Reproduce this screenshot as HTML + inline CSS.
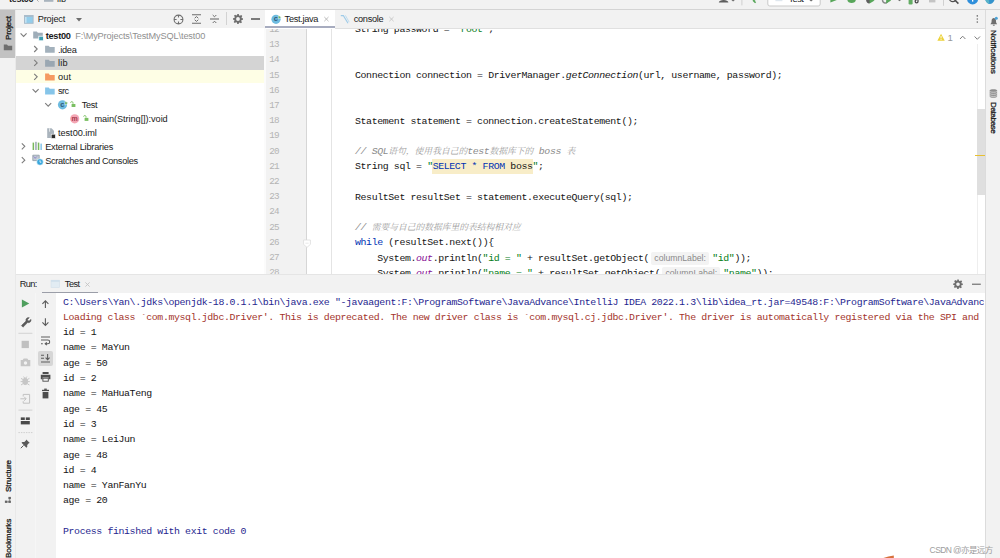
<!DOCTYPE html>
<html><head><meta charset="utf-8"><title>IDE</title>
<style>
*{box-sizing:border-box;margin:0;padding:0}
html,body{width:1000px;height:558px;overflow:hidden;background:#fff}
body{position:relative;font-family:"Liberation Sans","Noto Sans CJK SC",sans-serif;font-size:9.6px;color:#1a1a1a}
.a{position:absolute}
.t{position:absolute;white-space:pre;line-height:14px;height:14px;font-size:9.2px}
.m{position:absolute;white-space:pre;font-family:"Liberation Mono","Noto Sans CJK SC",monospace;font-size:9.90px;letter-spacing:-0.376px;line-height:15px;height:15px;color:#141414}
.ln{position:absolute;left:264px;width:15px;text-align:right;font-family:"Liberation Mono",monospace;font-size:9.3px;letter-spacing:-0.7px;line-height:15px;height:15px;color:#b4b4b4;margin-top:-0.4px}
.hint{position:absolute;height:13px;width:58.1px;line-height:13.4px;padding:0 0 0 3.1px;border-radius:2px;background:#f3f3f3;color:#8a8a8a;font-size:8.7px;white-space:pre}
.v{position:absolute;white-space:pre;-webkit-text-stroke:0.3px #1a1a1a;font-size:8.1px;line-height:12px;height:12px;transform-origin:0 0}
  .cj{color:#9c9c9c;font-family:"Liberation Serif","Noto Serif CJK SC",serif;font-size:8.78px;letter-spacing:0}
.g{background:#f2f2f2}
svg{position:absolute;overflow:visible}
</style></head><body>
<!-- top bar -->
<div class="a g" style="left:0;top:0;width:1000px;height:9px"></div>
<div class="a" style="left:0;top:9px;width:1000px;height:1px;background:#d4d4d4"></div>
<!-- left strip -->
<div class="a g" style="left:0;top:10px;width:15px;height:548px"></div>
<div class="a" style="left:15px;top:10px;width:1px;height:548px;background:#e9e9e9"></div>
<div class="a" style="left:0;top:10px;width:15px;height:48px;background:#c2c2c2"></div>
<!-- project header -->
<div class="a g" style="left:16px;top:10px;width:248px;height:18px"></div>
<!-- tree row highlights -->
<div class="a" style="left:16px;top:56.2px;width:248px;height:13.4px;background:#d4d4d4"></div>
<div class="a" style="left:16px;top:69.6px;width:248px;height:13.7px;background:#fefee5"></div>
<!-- editor tabs -->
<div class="a g" style="left:264px;top:10px;width:721px;height:18px"></div>
<div class="a" style="left:264px;top:28px;width:721px;height:1px;background:#e0e0e0"></div>
<div class="a" style="left:265px;top:10px;width:70px;height:19px;background:#fff"></div>
<div class="a" style="left:265px;top:25.9px;width:70px;height:2.2px;background:#a7acbf"></div>
<!-- gutter -->
<div class="a g" style="left:264px;top:29px;width:42px;height:245px"></div>
<div class="a" style="left:264px;top:28px;width:1.5px;height:246px;background:#fbfbfb"></div>
<div class="a" style="left:306px;top:29px;width:1px;height:245px;background:#d6d6d6"></div>
<div class="a" style="left:331px;top:29px;width:1px;height:245px;background:#e4e4e4"></div>
<!-- editor code -->
<div class="a" style="left:264px;top:29px;width:721px;height:245px;overflow:hidden"><div class="a" style="left:-264px;top:-29px;width:1000px;height:558px">
<div class="a" style="left:432px;top:158.6px;width:100.6px;height:15.5px;background:#f8edc8"></div>
<div class="ln" style="top:22.29px">12</div>
<div class="m" style="left:354.99px;top:22.29px;">String password = </div>
<div class="m" style="left:454.87px;top:22.29px;color:#067d17">"root"</div>
<div class="m" style="left:488.17px;top:22.29px;">;</div>
<div class="ln" style="top:37.50px">13</div>
<div class="ln" style="top:52.71px">14</div>
<div class="ln" style="top:67.93px">15</div>
<div class="m" style="left:354.99px;top:67.93px;">Connection connection = DriverManager.</div>
<div class="m" style="left:565.85px;top:67.93px;font-style:italic">getConnection</div>
<div class="m" style="left:637.99px;top:67.93px;">(url, username, password);</div>
<div class="ln" style="top:83.14px">16</div>
<div class="ln" style="top:98.36px">17</div>
<div class="ln" style="top:113.57px">18</div>
<div class="m" style="left:354.99px;top:113.57px;">Statement statement = connection.createStatement();</div>
<div class="ln" style="top:128.78px">19</div>
<div class="ln" style="top:144.00px">20</div>
<div class="m" style="left:354.99px;top:144.00px;color:#8c8c8c;font-style:italic">// SQL<span class="cj">语句，使用我自己的</span>test<span class="cj">数据库下的</span> boss <span class="cj">表</span></div>
<div class="ln" style="top:159.21px">21</div>
<div class="m" style="left:354.99px;top:159.21px;">String sql = </div>
<div class="m" style="left:427.13px;top:159.21px;color:#067d17">"</div>
<div class="m" style="left:432.68px;top:159.21px;color:#0033b3">SELECT * FROM </div>
<div class="m" style="left:510.36px;top:159.21px;">boss</div>
<div class="m" style="left:532.56px;top:159.21px;color:#067d17">"</div>
<div class="m" style="left:538.11px;top:159.21px;">;</div>
<div class="ln" style="top:174.43px">22</div>
<div class="ln" style="top:189.64px">23</div>
<div class="m" style="left:354.99px;top:189.64px;">ResultSet resultSet = statement.executeQuery(sql);</div>
<div class="ln" style="top:204.85px">24</div>
<div class="ln" style="top:220.07px">25</div>
<div class="m" style="left:354.99px;top:220.07px;color:#8c8c8c;font-style:italic">// <span class="cj">需要与自己的数据库里的表结构相对应</span></div>
<div class="ln" style="top:235.28px">26</div>
<div class="m" style="left:354.99px;top:235.28px;color:#0033b3">while</div>
<div class="m" style="left:382.74px;top:235.28px;"> (resultSet.next()){</div>
<div class="ln" style="top:250.50px">27</div>
<div class="ln" style="top:265.71px">28</div>
<div class="m" style="left:377.19px;top:250.50px;">System.</div>
<div class="m" style="left:416.03px;top:250.50px;color:#871094;font-style:italic">out</div>
<div class="m" style="left:432.68px;top:250.50px;">.println(</div>
<div class="m" style="left:482.62px;top:250.50px;color:#067d17">"id = "</div>
<div class="m" style="left:521.46px;top:250.50px;"> + resultSet.getObject(</div>
<div class="hint" style="left:651.19px;top:251.70px">columnLabel:</div>
<div class="m" style="left:712.19px;top:250.50px;color:#067d17">"id"</div>
<div class="m" style="left:734.39px;top:250.50px">));</div>
<div class="m" style="left:377.19px;top:265.71px;">System.</div>
<div class="m" style="left:416.03px;top:265.71px;color:#871094;font-style:italic">out</div>
<div class="m" style="left:432.68px;top:265.71px;">.println(</div>
<div class="m" style="left:482.62px;top:265.71px;color:#067d17">"name = "</div>
<div class="m" style="left:532.56px;top:265.71px;"> + resultSet.getObject(</div>
<div class="hint" style="left:662.29px;top:266.91px">columnLabel:</div>
<div class="m" style="left:723.29px;top:265.71px;color:#067d17">"name"</div>
<div class="m" style="left:756.58px;top:265.71px">));</div>
</div></div>
<!-- editor scrollbar -->
<div class="a" style="left:977px;top:44px;width:1px;height:230px;background:#eeeeee"></div>
<div class="a" style="left:977px;top:108.5px;width:8px;height:86.5px;background:#dfdfdf"></div>
<div class="a" style="left:975px;top:155px;width:10px;height:1.4px;background:#e8c030"></div>
<!-- right strip -->
<div class="a g" style="left:985px;top:10px;width:15px;height:548px"></div>
<div class="a" style="left:985px;top:10px;width:1px;height:548px;background:#dcdcdc"></div>
<!-- run header -->
<div class="a g" style="left:16px;top:274px;width:969px;height:19px"></div>
<div class="a" style="left:16px;top:274px;width:969px;height:1px;background:#e5e5e5"></div>
<div class="a" style="left:42px;top:291.6px;width:56px;height:1.7px;background:#9b9ea8"></div>
<!-- run toolbars -->
<div class="a g" style="left:16px;top:293px;width:40px;height:265px"></div>
<div class="a" style="left:34.5px;top:293px;width:1.5px;height:265px;background:#f6f6f6"></div>
<div class="a" style="left:56px;top:293px;width:928.2px;height:265px;overflow:hidden">
<div class="m" style="left:7px;top:1.50px;color:#1f1f8f">C:\Users\Yan\.jdks\openjdk-18.0.1.1\bin\java.exe "-javaagent:F:\ProgramSoftware\JavaAdvance\IntelliJ IDEA 2022.1.3\lib\idea_rt.jar=49548:F:\ProgramSoftware\JavaAdvance\IntelliJ IDEA 2022.1.3\bin" -Dfile.encoding=UTF-8 Test</div>
<div class="m" style="left:7px;top:16.80px;color:#a3342b">Loading class `com.mysql.jdbc.Driver'. This is deprecated. The new driver class is `com.mysql.cj.jdbc.Driver'. The driver is automatically registered via the SPI and manual loading of the driver class is generally unnecessary.</div>
<div class="m" style="left:7px;top:32.10px;">id = 1</div>
<div class="m" style="left:7px;top:47.40px;">name = MaYun</div>
<div class="m" style="left:7px;top:62.70px;">age = 50</div>
<div class="m" style="left:7px;top:78.00px;">id = 2</div>
<div class="m" style="left:7px;top:93.30px;">name = MaHuaTeng</div>
<div class="m" style="left:7px;top:108.60px;">age = 45</div>
<div class="m" style="left:7px;top:123.90px;">id = 3</div>
<div class="m" style="left:7px;top:139.20px;">name = LeiJun</div>
<div class="m" style="left:7px;top:154.50px;">age = 48</div>
<div class="m" style="left:7px;top:169.80px;">id = 4</div>
<div class="m" style="left:7px;top:185.10px;">name = YanFanYu</div>
<div class="m" style="left:7px;top:200.40px;">age = 20</div>
<div class="m" style="left:7px;top:231.00px;color:#1f1f8f">Process finished with exit code 0</div>
</div>
<!-- ===== project header icons ===== -->
<svg style="left:24px;top:15px" width="10" height="9" viewBox="0 0 10 9"><rect x="0.5" y="0.5" width="8.600" height="7.800" fill="#93cdeb" stroke="#a9bccb" stroke-width="1"/><rect x="0.5" y="0.5" width="8.600" height="1.400" fill="#a9bccb"/><rect x="1" y="2" width="1.600" height="5.800" fill="#c4e2f2"/></svg>
<svg style="left:76px;top:17.5px" width="6" height="4" viewBox="0 0 6 4"><path d="M0 0h6L3 3.6z" fill="#6e6e6e"/></svg>
<svg style="left:173px;top:13.5px" width="11" height="11" viewBox="0 0 11 11" fill="none" stroke="#6e6e6e" stroke-width="1.1"><circle cx="5.5" cy="5.5" r="4.4"/><path d="M5.5 1v2.6M5.5 7.4V10M1 5.5h2.6M7.4 5.5H10"/></svg>
<svg style="left:192px;top:14px" width="9" height="10" viewBox="0 0 9 10" fill="none" stroke="#6e6e6e" stroke-width="1.1"><path d="M0 0.8h9M0 9.2h9"/><path d="M2.7 4.2L4.5 2.6l1.8 1.6M2.7 5.8L4.5 7.4l1.8-1.6" stroke-width="1"/></svg>
<svg style="left:210px;top:14px" width="9" height="10" viewBox="0 0 9 10" fill="none" stroke="#6e6e6e" stroke-width="1.1"><path d="M0 5h9"/><path d="M2.7 1L4.5 2.8 6.3 1M2.7 9L4.5 7.2 6.3 9" stroke-width="1"/></svg>
<div class="a" style="left:226px;top:11.5px;width:1px;height:13px;background:#d2d2d2"></div>
<svg class="gear" style="left:232.5px;top:14px" width="10" height="10" viewBox="0 0 10 10"><path fill="#6e6e6e" fill-rule="evenodd" d="M4.2 0h1.6l.3 1.4.9.4L8.200 1l1.100 1.100-.800 1.200.400.900L10 4.200v1.600l-1.400.3-.4.900.800 1.200-1.100 1.100-1.200-.8-.9.400L5.800 10H4.200l-.3-1.400-.9-.4-1.200.8L.700 7.900l.8-1.200-.4-.9L0 5.800V4.200l1.400-.3.400-.9L1 1.800 2.100.700l1.200.8.900-.4zM5 3.100a1.900 1.900 0 1 0 0 3.800 1.900 1.900 0 0 0 0-3.800z"/></svg>
<div class="a" style="left:251.3px;top:18.4px;width:8.8px;height:1.3px;background:#7a7a7a"></div>
<!-- ===== tree arrows ===== -->
<svg style="left:0;top:0" width="270" height="170" viewBox="0 0 270 170" fill="none" stroke="#7d7d7d" stroke-width="1.1">
<path d="M20.6 33.4l3 3 3-3"/>
<path d="M34.2 46l3 3-3 3"/>
<path d="M34.2 59.9l3 3-3 3"/>
<path d="M34.2 73.8l3 3-3 3"/>
<path d="M32.6 89.2l3 3 3-3"/>
<path d="M45.2 103.100l3 3 3-3"/>
<path d="M21.8 143.300l3 3-3 3"/>
<path d="M21.8 157.200l3 3-3 3"/>
</svg>
<!-- ===== folders ===== -->
<svg style="left:0;top:0" width="270" height="170" viewBox="0 0 270 170">
<path transform="translate(33.200,30.800)" d="M0 0.600h3.600l1.100 1.300h4.900v5.700H0z" fill="#9fadb9"/>
<rect x="38.800" y="36.200" width="4.600" height="4.600" fill="#3d9db0" stroke="#fff" stroke-width="0.800"/>
<path transform="translate(45.100,45.200)" d="M0 0.600h3.600l1.100 1.300h4.900v5.700H0z" fill="#a3b1bc"/>
<path transform="translate(45.100,59.100)" d="M0 0.600h3.600l1.100 1.300h4.900v5.700H0z" fill="#9aa7b2"/>
<path transform="translate(45.100,73)" d="M0 0.600h3.600l1.100 1.300h4.900v5.700H0z" fill="#f59a62"/>
<path transform="translate(45.100,86.900)" d="M0 0.600h3.600l1.100 1.300h4.900v5.700H0z" fill="#86c5e9"/>
<!-- class icon -->
<circle cx="62.500" cy="104.800" r="4.600" fill="#6dbbe0"/>
<path d="M65 101.200l3.200 1.900-3.200 1.900z" fill="#5aa84f" stroke="#fff" stroke-width="0.500"/>
<!-- public -->
<path d="M70.600 102.800c0-1.600 2.400-1.600 2.400 0v1" fill="none" stroke="#7abf62" stroke-width="0.900"/>
<rect x="71.600" y="104" width="3.800" height="3" fill="#7abf62"/>
<!-- method icon -->
<circle cx="74.700" cy="118.800" r="4.600" fill="#f4a6b4"/>
<path d="M83.600 116.700c0-1.600 2.400-1.600 2.400 0v1" fill="none" stroke="#7abf62" stroke-width="0.900"/>
<rect x="84.600" y="117.900" width="3.800" height="3" fill="#7abf62"/>
<!-- iml file -->
<path d="M47.200 128.300h4.300l2.500 2.500v7.200h-6.800z" fill="#aab4bd"/>
<path d="M49.600 128.300v3.400" stroke="#fff" stroke-width="0.700"/>
<rect x="51.200" y="134.200" width="4.200" height="4.200" fill="#2b2b2b" stroke="#fff" stroke-width="0.600"/>
<!-- external libraries -->
<rect x="32.600" y="142.600" width="1.500" height="7.400" fill="#79b85c"/>
<rect x="35.200" y="141.800" width="1.500" height="8.200" fill="#9aa7b2"/>
<rect x="37.800" y="142.600" width="1.500" height="7.400" fill="#79b85c"/>
<rect x="40.400" y="143.600" width="1.500" height="6.400" fill="#86c5e9"/>
<!-- scratches -->
<path d="M32.800 155.200h6.400v5.400h-6.400z" fill="#c3ccd4" stroke="#8d9ba6" stroke-width="0.800"/>
<path d="M33.600 156.400l2 2M37 156.400l-2 2" stroke="#7b68c8" stroke-width="0.700"/>
<circle cx="40" cy="162" r="3.300" fill="#39a7dc" stroke="#fff" stroke-width="0.600"/>
<path d="M40 160.300v1.900h1.400" stroke="#fff" stroke-width="0.800" fill="none"/>
</svg>
<div class="t" style="left:60.200px;top:97.600px;font-size:7.500px;font-weight:bold;color:#2e5a78;line-height:14px">c</div>
<div class="t" style="left:71.600px;top:111.600px;font-size:7px;font-weight:bold;color:#a5384c;line-height:14px">m</div>
<!-- ===== editor tab icons ===== -->
<svg style="left:264px;top:10px" width="721" height="20" viewBox="264 10 721 20">
<circle cx="276" cy="19.300" r="4.600" fill="#6dbbe0"/>
<path d="M278.300 15.400l3.100 1.800-3.100 1.800z" fill="#5aa84f" stroke="#fff" stroke-width="0.500"/>
<path d="M324.300 17l4.200 4.200M328.500 17l-4.200 4.200" stroke="#b4b4b4" stroke-width="0.900" fill="none"/>
<path d="M389.400 17l4.200 4.200M393.600 17l-4.200 4.200" stroke="#c4c4c4" stroke-width="0.900" fill="none"/>
<path d="M340.800 15.600h2.600l4.600 7.600" stroke="#9fcbe8" stroke-width="1.100" fill="none"/>
<path d="M345.400 15.400l3.800 6.800" stroke="#b9d9ee" stroke-width="0.900" fill="none"/>
<circle cx="977.3" cy="15.900" r="0.800" fill="#6e6e6e"/><circle cx="977.3" cy="19" r="0.800" fill="#6e6e6e"/><circle cx="977.3" cy="22.100" r="0.800" fill="#6e6e6e"/>
</svg>
<div class="t" style="left:273.700px;top:12.200px;font-size:7.500px;font-weight:bold;color:#2e5a78;line-height:14px">c</div>
<!-- ===== editor inspections widget ===== -->
<svg style="left:930px;top:30px" width="55" height="14" viewBox="930 30 55 14">
<path d="M941.050 33.800l3.700 6.900h-7.400z" fill="#ecd23a"/>
<path d="M941.050 36v2.400M941.050 39.100v0.900" stroke="#fff" stroke-width="0.900"/>
<path d="M960 39l2.700-2.800 2.700 2.800" stroke="#7d7d7d" stroke-width="1" fill="none"/>
<path d="M974.600 36.500l2.700 2.800 2.700-2.800" stroke="#7d7d7d" stroke-width="1" fill="none"/>
</svg>
<!-- ===== right strip ===== -->
<svg style="left:985px;top:10px" width="15" height="130" viewBox="985 10 15 130">
<path d="M990.400 24.200c1.200-1 1.200-2 1.200-3.600 0-3.600 4.400-3.600 4.400 0 0 1.600 0 2.600 1.200 3.600z" fill="#6e6e6e"/>
<path d="M992.900 25.200h1.800" stroke="#6e6e6e" stroke-width="1"/>
<circle cx="996.300" cy="18.300" r="1.500" fill="#4aa3d8"/>
<path d="M989.700 90.600c0-1.700 7.400-1.700 7.400 0v5.900c0 1.700-7.400 1.700-7.400 0z" fill="#8e8e8e"/><path d="M989.700 91.500c1 1 6.400 1 7.400 0M989.700 93.600c1 1 6.400 1 7.400 0M989.700 95.700c1 1 6.400 1 7.400 0" stroke="#e4e4e4" stroke-width="0.700" fill="none"/>
</svg>
<!-- ===== left strip ===== -->
<svg style="left:0;top:40px" width="15" height="15" viewBox="0 40 15 15"><path d="M3.800 44.600h3.200l1 1.100h4.200v4.600H3.800z" fill="#6e6e6e"/></svg>
<svg style="left:0;top:494px" width="15" height="14" viewBox="0 494 15 14" fill="#666"><path d="M9.600 498v4M6 501.800h4" stroke="#a8a8a8" stroke-width="1" fill="none"/><rect x="8.400" y="496.900" width="2.500" height="2.300"/><rect x="4.900" y="500.600" width="2.500" height="2.300"/><rect x="8.400" y="500.600" width="2.500" height="2.300"/></svg>
<!-- ===== run header ===== -->
<svg style="left:16px;top:274px" width="969" height="20" viewBox="16 274 969 20">
<rect x="51" y="280.200" width="8.600" height="7.400" fill="#e2ecf3" stroke="#d3e0ea" stroke-width="0.600"/>
<rect x="51" y="280.200" width="8.600" height="1.600" fill="#cfdfeb"/>
<path d="M85.400 282.400l4.200 4.200M89.600 282.400l-4.200 4.200" stroke="#c4c4c4" stroke-width="0.900" fill="none"/>
<path transform="translate(953.200,279.400) scale(0.960)" fill="#6e6e6e" fill-rule="evenodd" d="M4.2 0h1.600l.3 1.400.9.400L8.200 1l1.100 1.100-.800 1.200.400.900L10 4.200v1.600l-1.400.300-.400.900.800 1.200-1.100 1.100-1.200-.800-.9.400L5.800 10H4.200l-.300-1.400-.9-.4-1.200.800L.700 7.900l.800-1.200-.4-.9L0 5.800V4.200l1.400-.3.400-.9L1 1.800 2.100.700l1.200.8.900-.4zM5 3.100a1.900 1.900 0 1 0 0 3.800 1.900 1.900 0 0 0 0-3.800z"/>
<rect x="972" y="283.600" width="8.800" height="1.300" fill="#7a7a7a"/>
</svg>
<!-- ===== run toolbars ===== -->
<div class="a" style="left:37.800px;top:350.600px;width:15.200px;height:15.200px;border-radius:2px;background:#d6d6d6"></div>
<svg style="left:16px;top:293px" width="40" height="160" viewBox="16 293 40 160">
<!-- col1 -->
<path d="M21.900 299.600l7.400 4-7.400 4z" fill="#4f9f5e"/>
<path d="M21.400 325.600l4.600-4.600a2.600 2.600 0 0 1 3.300-3.300l-1.700 1.700 .300 1.300 1.300.300 1.700-1.700a2.600 2.600 0 0 1-3.300 3.300l-4.600 4.600z" fill="#5a5a5a" stroke="#5a5a5a" stroke-width="0.500"/>
<rect x="18.400" y="332.800" width="14" height="1" fill="#d3d3d3"/>
<rect x="21.600" y="340.800" width="7.300" height="7.300" fill="#c0c0c0"/>
<!-- camera -->
<path d="M20.700 360h2l1-1.400h3.600l1 1.400h2v6.200H20.700z" fill="#c6c6c6"/>
<circle cx="25.500" cy="363" r="1.700" fill="#f2f2f2"/>
<!-- bug-ish -->
<g stroke="#c6c6c6" stroke-width="1" fill="none"><ellipse cx="25.200" cy="381.400" rx="2.400" ry="3.200" fill="#c6c6c6"/><path d="M21 378.400l2.200 1.200M29.400 378.400l-2.200 1.200M20.600 381.600h2.400M29.800 381.600h-2.400M21 385l2.200-1.400M29.400 385l-2.200-1.400M23.600 376.600l1 1.400M26.800 376.600l-1 1.400"/></g>
<!-- exit -->
<g stroke="#c2c2c2" stroke-width="1" fill="none"><path d="M23.200 396.400v-2h6.400v8.800h-6.400v-2"/><path d="M20.400 398.800h5.600M24.200 396.800l2 2-2 2"/></g>
<rect x="18.400" y="409.600" width="14" height="1" fill="#d3d3d3"/>
<!-- layout -->
<rect x="20.800" y="417.400" width="4" height="2.600" fill="#4a4a4a"/><rect x="25.800" y="417.400" width="4" height="2.600" fill="#4a4a4a"/><rect x="20.800" y="421" width="9" height="3.400" fill="#4a4a4a"/>
<path d="M18.400 432.600h14" stroke="#cfcfcf" stroke-width="1" stroke-dasharray="1.500 1"/>
<!-- pin -->
<path d="M26.200 439.400l3.600 3.600-1 .3-1.600 1.600.1 1.900-.9.900-4.900-4.900.9-.9 1.900.1 1.600-1.600z" fill="#5a5a5a"/><path d="M23.600 445.400l-2.800 2.800" stroke="#5a5a5a" stroke-width="1"/>
<!-- col2 -->
<g stroke="#5c5c5c" stroke-width="1.100" fill="none">
<path d="M45.400 308v-7M42.400 303.800l3-3 3 3"/>
<path d="M45.400 318.200v7M42.400 322.400l3 3 3-3"/>
<path d="M41 337h9M41 340h6.800a1.900 1.900 0 0 1 0 3.800h-2.400M46.800 342.400l-1.600 1.400 1.600 1.400M41 343.800h1.800"/>
<path d="M41 355.200h3M41 358.200h3M41 362h9M47.600 354v5.400M45.600 357.600l2 2 2-2"/>
</g>
<!-- print -->
<rect x="42.600" y="372" width="6" height="2" fill="#4d4d4d"/><path d="M40.800 374.800h9.600v4.400h-1.800v-1.800h-6v1.800h-1.800z" fill="#4d4d4d"/><rect x="42.900" y="378.200" width="5.400" height="3" fill="none" stroke="#4d4d4d" stroke-width="0.900"/>
<!-- trash -->
<rect x="42" y="389.800" width="7" height="1.300" fill="#4d4d4d"/><rect x="44.200" y="388.600" width="2.600" height="1.300" fill="#4d4d4d"/><path d="M42.600 392h5.800v6.400h-5.800z" fill="#4d4d4d"/>
</svg>
<!-- ===== top bar partial icons ===== -->
<svg style="left:0;top:0" width="1000" height="9" viewBox="0 0 1000 9">
<path d="M37 0l1.600 1.600" stroke="#9a9a9a" stroke-width="0.800" fill="none"/>
<rect x="44" y="-4" width="9.400" height="5.800" fill="#a9b4be"/>
<path d="M718.800 2.600c0-3.400 9.600-3.400 9.600 0z" fill="#5e5e5e"/>
<path d="M731.400 0h3.400l-1.700 1.600z" fill="#6e6e6e"/>
<rect x="741.400" y="0" width="1" height="5.400" fill="#d0d0d0"/>
<path d="M757.400 -3l-3.800 3.800 2 2" stroke="#58a65a" stroke-width="1.600" fill="none"/>
<rect x="767.800" y="-6" width="52.400" height="12" rx="2" fill="#fff" stroke="#c9c9c9" stroke-width="1"/>
<rect x="775.400" y="-4" width="7" height="5.200" fill="#dfe7ee"/>
<path d="M809.400 0h3.400l-1.700 1.500z" fill="#6e6e6e"/>
<path d="M830.400 -5l6.400 5-6.400 2.400z" fill="#58a65a"/>
<path d="M847.400 0c0 4 8.400 4 8.400 0z" fill="#58a65a"/>
<path d="M866 -1c0 5 4 5 4 3.800v-4z" fill="#5e5e5e"/><path d="M869.600 -2l5 2.600-5 2.800z" fill="#58a65a"/>
<path d="M882.400 -1c0 5 4.600 5 5.200 2" stroke="#8a8a8a" stroke-width="1.400" fill="none"/><path d="M886.200 -2l5 2.600-5 2.800z" fill="#58a65a"/>
<path d="M898 0h3l-1.500 1.300z" fill="#6e6e6e"/>
<rect x="908.600" y="-2" width="4" height="6.400" rx="1.200" fill="#62ab62"/><path d="M918 -3v4.400a1.400 1.400 0 1 1-1.400-1.400" stroke="#4a4a4a" stroke-width="1.300" fill="none"/>
<rect x="929" y="-4" width="6.400" height="6.400" fill="#c4c4c4"/>
<rect x="943" y="0" width="1" height="5.800" fill="#d0d0d0"/>
<path d="M954.800 0l3.600 3.600" stroke="#4e4e4e" stroke-width="1.500" fill="none"/><circle cx="952.800" cy="-2" r="3.600" fill="none" stroke="#4e4e4e" stroke-width="1.200"/>
<circle cx="972.600" cy="-1.200" r="5.600" fill="#2f8fdb"/><rect x="972" y="-3" width="1.300" height="4.600" fill="#fff"/>
<path d="M984.800 -3c0.600 9.200 9.400 9.200 10.400 0z" fill="#3493cc"/><path d="M984.800 -3c0.400 5 2.600 6.600 4.600 6.800l-1-6.800z" fill="#58b3c8"/>
</svg>
<!-- fold marker + bottom deco -->
<svg style="left:300px;top:236px" width="14" height="14" viewBox="300 236 14 14"><path d="M303.600 240h6.800v4.400l-3.400 3-3.400-3z" fill="#fff" stroke="#dcdcdc" stroke-width="0.800"/><path d="M305.400 243.200h3.200" stroke="#e2e2e2" stroke-width="0.800"/></svg>
<svg style="left:880px;top:550px" width="20" height="8" viewBox="880 550 20 8"><path d="M883.400 558l5-1.400 5.400-1v2.400z" fill="#d8703c"/></svg>

<div class="t" id="u0" style="left:45.70px;top:28.64px;letter-spacing:-0.266px;font-weight:bold">test00</div>
<div class="t" id="u1" style="left:75.30px;top:28.64px;letter-spacing:-0.128px;color:#8f8f8f">F:\MyProjects\TestMySQL\test00</div>
<div class="t" id="u2" style="left:58.00px;top:42.54px;letter-spacing:-0.297px;">.idea</div>
<div class="t" id="u3" style="left:58.00px;top:56.43px;letter-spacing:0.239px;">lib</div>
<div class="t" id="u4" style="left:58.00px;top:70.31px;letter-spacing:0.087px;">out</div>
<div class="t" id="u5" style="left:58.00px;top:84.21px;letter-spacing:-0.600px;">src</div>
<div class="t" id="u6" style="left:81.80px;top:98.09px;letter-spacing:-0.360px;">Test</div>
<div class="t" id="u7" style="left:94.40px;top:111.99px;letter-spacing:-0.067px;">main(String[]):void</div>
<div class="t" id="u8" style="left:58.00px;top:125.88px;letter-spacing:-0.045px;">test00.iml</div>
<div class="t" id="u9" style="left:45.20px;top:139.76px;letter-spacing:-0.200px;">External Libraries</div>
<div class="t" id="u10" style="left:45.20px;top:153.66px;letter-spacing:-0.321px;">Scratches and Consoles</div>
<div class="t" id="u11" style="left:37.70px;top:12.00px;letter-spacing:-0.155px;">Project</div>
<div class="t" id="u12" style="left:284.60px;top:12.00px;letter-spacing:-0.302px;">Test.java</div>
<div class="t" id="u13" style="left:353.70px;top:12.00px;letter-spacing:-0.288px;">console</div>
<div class="t" id="u14" style="left:19.70px;top:277.20px;letter-spacing:-0.578px;">Run:</div>
<div class="t" id="u15" style="left:64.80px;top:277.20px;letter-spacing:-0.503px;">Test</div>
<div class="t" id="u16" style="left:9.00px;top:-7.90px;letter-spacing:-0.375px;font-weight:bold">test00</div>
<div class="t" id="u17" style="left:57.00px;top:-7.90px;letter-spacing:-0.081px;">lib</div>
<div class="t" id="u18" style="left:788.50px;top:-7.90px;letter-spacing:-0.503px;">Test</div>
<div class="t" id="u19" style="left:947.40px;top:30.90px;letter-spacing:0.000px;color:#999;font-size:9.6px">1</div>
<div class="t" id="u20" style="left:929.60px;top:542.80px;letter-spacing:-0.600px;color:#9d9d9d;font-size:8.5px">CSDN @亦是远方</div>
<div class="v" id="v0" style="left:999.20px;top:29.80px;transform:rotate(90deg);letter-spacing:-0.031px;">Notifications</div>
<div class="v" id="v1" style="left:999.20px;top:102.00px;transform:rotate(90deg);letter-spacing:-0.421px;">Database</div>
<div class="v" id="v2" style="left:2.60px;top:39.60px;transform:rotate(-90deg);letter-spacing:-0.200px;">Project</div>
<div class="v" id="v3" style="left:2.80px;top:492.00px;transform:rotate(-90deg);letter-spacing:-0.099px;">Structure</div>
<div class="v" id="v4" style="left:2.80px;top:558.40px;transform:rotate(-90deg);letter-spacing:-0.163px;">Bookmarks</div>
</body></html>
